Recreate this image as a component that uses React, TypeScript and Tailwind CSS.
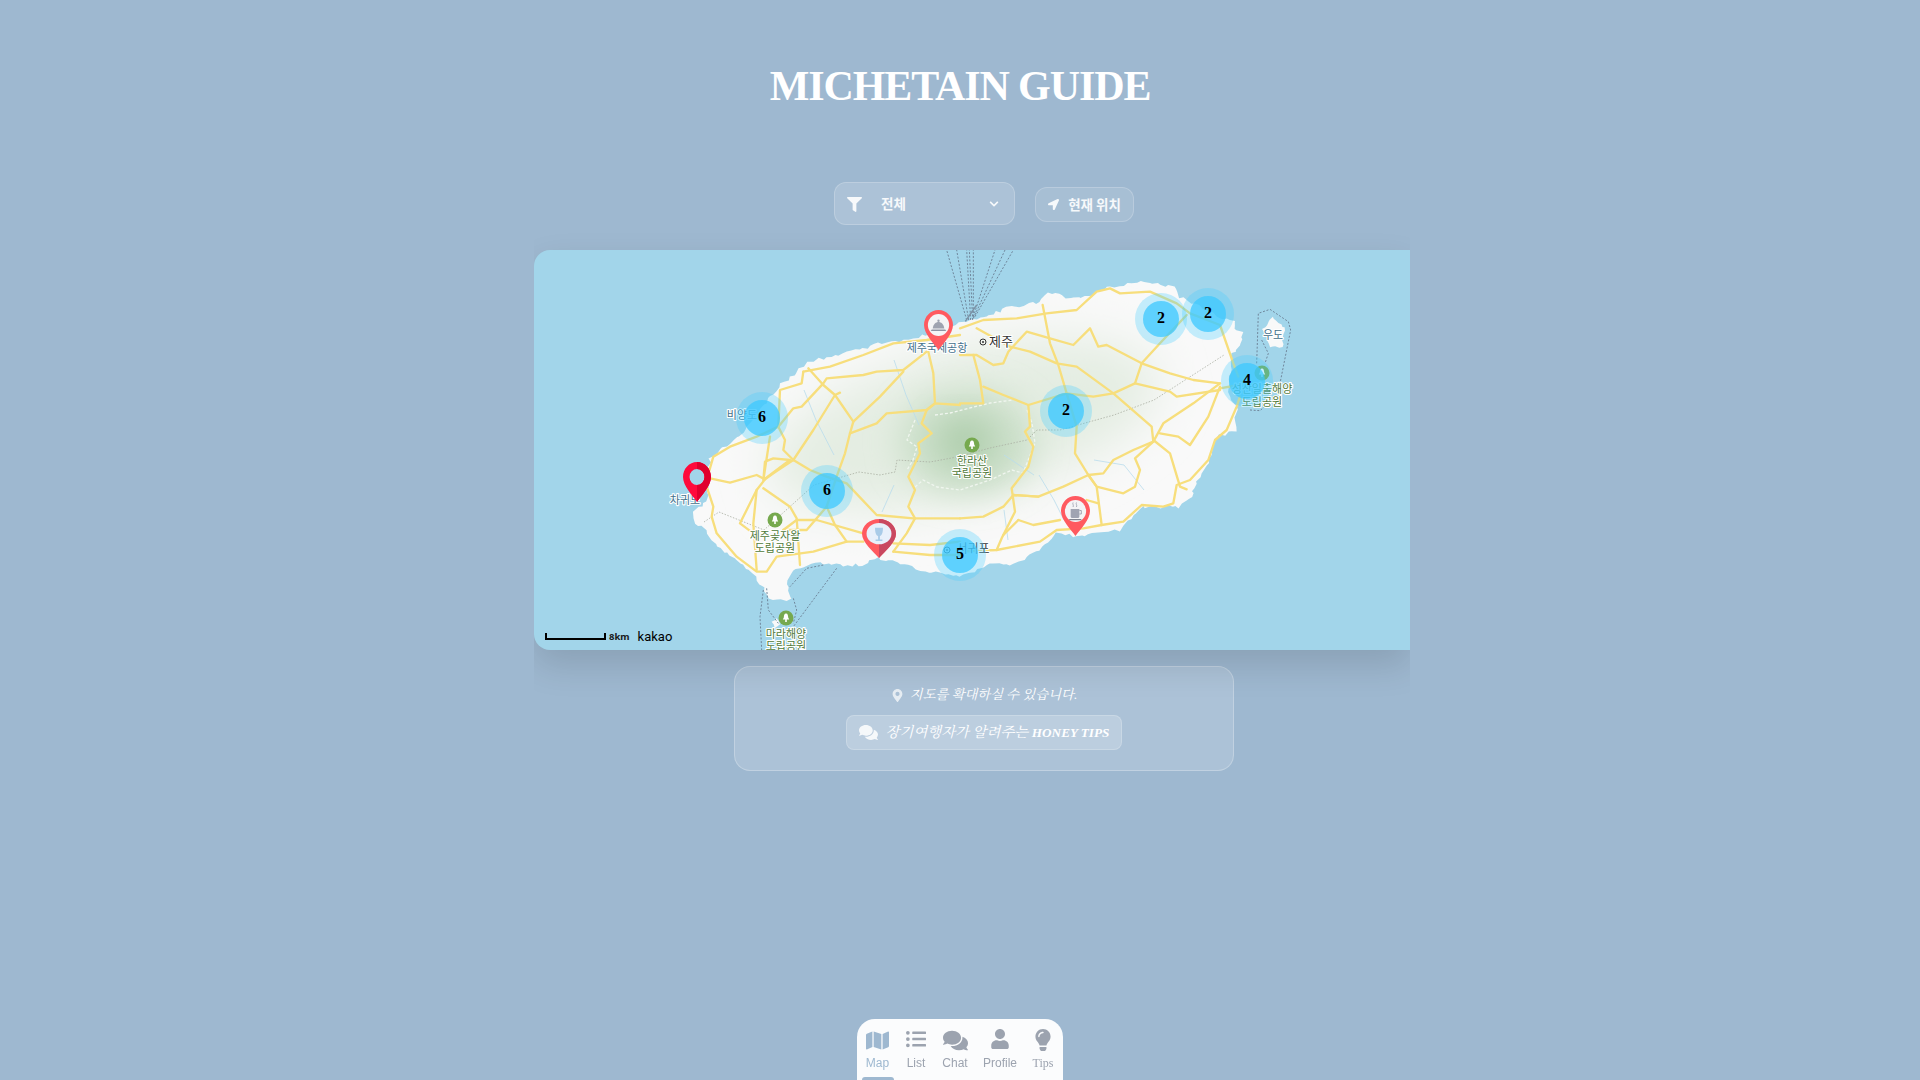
import React from "react";
import { FaFilter, FaChevronDown, FaLocationArrow, FaMapMarkerAlt, FaComments, FaMap, FaListUl, FaUser, FaLightbulb } from "react-icons/fa";

const rough = (pts: number[][], seed: number, amp = 1.6, step = 4) => {
  let s = seed;
  const rnd = () => {
    s = (s * 16807) % 2147483647;
    return s / 2147483647 - 0.5;
  };
  const out: string[] = [];
  pts.forEach((p, i) => {
    const q = pts[(i + 1) % pts.length];
    const d = Math.hypot(q[0] - p[0], q[1] - p[1]);
    const n = Math.max(1, Math.round(d / step));
    for (let k = 0; k < n; k++) {
      const t = k / n;
      out.push(`${(p[0] + (q[0] - p[0]) * t + rnd() * amp * 2).toFixed(1)},${(p[1] + (q[1] - p[1]) * t + rnd() * amp * 2).toFixed(1)}`);
    }
  });
  return out.join(" ");
};

const ISLAND = [
  [176, 208], [199, 190], [209, 183], [222, 165], [244, 137], [269, 117], [272, 112], [313, 103], [345, 94], [373, 90], [400, 82], [426, 73], [449, 68], [473, 58], [506, 52], [513, 42], [536, 48], [556, 46], [573, 38], [598, 33], [611, 32], [639, 37], [646, 47], [668, 58], [689, 70], [701, 70], [699, 80], [708, 83], [706, 97], [698, 103], [696, 123], [693, 143], [703, 157], [701, 180], [683, 187], [673, 217], [659, 237], [660, 244], [646, 257], [608, 257], [586, 280], [543, 287], [523, 283], [506, 300], [493, 307], [476, 315], [456, 312], [440, 322], [426, 327], [386, 320], [363, 312], [344, 308], [329, 315], [306, 315], [286, 313], [263, 318], [253, 330], [256, 350], [236, 350], [229, 337], [216, 320], [183, 297], [169, 277], [161, 273], [159, 263], [173, 250], [174, 223],
];

const R1 = [
  "530,720 550,650 600,620 680,590 745,560 790,505 815,500 880,430 890,415 1000,405 1040,395 1120,390 1190,335",
  "820,395 900,380 1000,345 1090,310 1190,300 1290,285",
  "745,560 750,450 815,430 820,395",
  "835,385 880,435 915,465 970,545 1050,470 1120,395",
  "930,458 915,465 850,570 790,660 760,630 765,600 745,560",
  "970,545 960,580 945,640 920,710 890,800",
  "960,580 1040,550 1070,520 1190,510 1215,490 1290,495",
  "1195,335 1210,400 1215,490 1190,510 1175,550 1205,580 1165,610 1170,640 1150,680 1135,710 1155,750 1135,800 1155,835 1130,880 1090,935",
  "790,660 840,690 890,710 950,730 1040,825 1150,835 1290,835",
  "700,720 780,660 730,655 705,665 700,720 720,590",
  "540,715 600,728 680,705 705,718 730,700 790,660",
  "705,718 680,750 660,790 630,850 670,880",
  "680,750 670,850 680,990",
  "700,745 780,800 800,835 810,975",
  "530,740 550,800 545,830 560,880 620,950 680,995 710,995 740,950 850,935 950,905 1000,905",
  "760,870 800,840 860,840 1000,880",
  "890,800 830,870 760,870",
  "890,800 915,855 950,905",
  "1090,910 1200,915 1290,905",
  "1090,935 1200,945 1290,945",
];
const R2 = [
  "0,345 50,345 100,375 130,370 145,335 200,275 270,295 340,315 390,265 415,320 440,315 545,370 630,400 700,420 780,430",
  "0,265 70,240 170,235 260,220 350,210 410,155 450,145 480,160 570,155 650,190 690,220 780,255 820,370 835,410",
  "840,470 830,500 800,570 765,600 745,660 690,720 650,735 640,790 610,800 545,795 490,845 425,855 370,865 290,870 240,905 110,930 0,935",
  "50,265 150,320 210,335 290,370 350,380 460,460 575,560 580,605 525,655 540,690 525,740 490,760 410,740 385,705 345,640 350,560 320,460 295,375 270,310 248,195",
  "205,495 320,460 400,470 460,460 525,430 545,370 600,310 680,225",
  "525,430 630,455 650,470 780,450",
  "780,430 700,490 610,550 580,605 520,630 460,660 430,700 385,705 310,740 235,770 160,765 130,800 70,830 0,835",
  "780,440 745,530 690,615 655,590 600,580",
  "580,600 630,640 660,740 680,748",
  "385,705 410,740 425,855",
  "380,780 415,790",
  "780,445 835,435",
  "40,345 60,420 70,490 0,490",
  "70,440 130,465 205,495 210,560 195,575 220,620 205,680 155,745 165,815 125,895 110,930",
  "175,840 130,885",
  "175,840 220,855 300,840",
  "160,765 235,770",
];

const Road = ({ p }: { p: string }) => (
  <polyline points={p} fill="none" stroke="#f7de7c" strokeWidth="7" strokeLinejoin="round" strokeLinecap="round" />
);

const Park = ({ x, y }: { x: number; y: number }) => (
  <g transform={`translate(${x},${y})`}>
    <circle r="7.5" fill="#76a94e" />
    <path d="M0,-4.5 C-1.8,-4.5 -2,-2.5 -2.2,-0.5 L-3.2,1.5 L-0.8,1.5 L-0.8,4 L0.8,4 L0.8,1.5 L3.2,1.5 L2.2,-0.5 C2,-2.5 1.8,-4.5 0,-4.5 Z" fill="#fff" />
  </g>
);

const Label = ({ x, y, c, size = 11, children }: { x: number; y: number; c: string; size?: number; children: React.ReactNode }) => (
  <text x={x} y={y + 4} textAnchor="middle" fontSize={size} fill={c} stroke="#fff" strokeWidth="2.2" paintOrder="stroke" strokeLinejoin="round" dominantBaseline="middle" className="font-['Noto_Sans_CJK_KR',sans-serif]">
    {children}
  </text>
);

const MapArt = () => (
  <svg viewBox="0 0 876 400" className="absolute inset-0 w-[876px] h-[400px]">
    <defs>
      <clipPath id="isl">
        <polygon points={rough(ISLAND, 4711)} />
      </clipPath>
      <filter id="b1" x="-50%" y="-50%" width="200%" height="200%"><feGaussianBlur stdDeviation="24" /></filter>
      <filter id="b2" x="-50%" y="-50%" width="200%" height="200%"><feGaussianBlur stdDeviation="16" /></filter>
    </defs>
    <polygon points={rough(ISLAND, 4711)} fill="#f9f9f9" />
    <g clipPath="url(#isl)">
      <ellipse cx="430" cy="175" rx="200" ry="75" fill="#e4ede2" filter="url(#b1)" transform="rotate(-14 430 175)" />
      <ellipse cx="433" cy="192" rx="68" ry="52" fill="#cbdfc9" filter="url(#b2)" />
      <ellipse cx="432" cy="192" rx="28" ry="24" fill="#aecdac" filter="url(#b2)" />
    </g>
    <polygon points={rough([[729, 80], [738, 67], [751, 78], [748, 97], [736, 97]], 99, 1, 3)} fill="#f9f9f9" />
    <polygon points={rough([[238, 372], [243, 368], [246, 374], [241, 378]], 17, 0.4, 3)} fill="#f9f9f9" />
    <g fill="none" stroke="#b9dcec" strokeWidth="0.8">
      <path d="M360,110 L372,145 L385,175 M270,140 L282,170 L300,205 M470,260 L474,290 M560,210 L590,215 L610,240 M505,225 L520,250 L530,270 M360,235 L348,262 M470,205 L500,225" />
    </g>
    <g fill="none" stroke="#a9aea2" strokeWidth="0.8" strokeDasharray="1.5 1.5">
      <path d="M170,272 L185,262 L230,280 L250,262 L280,235 L325,222 L346,225 L361,222 L363,210 L396,212 L423,207 L456,198 L493,190 L503,180 L526,180 L580,165 L620,150 L690,105" />
    </g>
    <g fill="none" stroke="#f0f6ef" strokeWidth="1.3" strokeDasharray="3 2">
      <path d="M401,165 L416,163 L456,153 L479,150" />
      <path d="M381,170 L373,190 L383,197 L379,210 L373,220" />
      <path d="M493,160 L498,173 L501,193 L489,223 L478,220 L456,230 L426,240 L403,237 L389,230 L381,237" />
    </g>
    <g transform="translate(-4,-10) scale(0.33333)">
      <g fill="none" stroke="#6f879c" strokeWidth="3" strokeDasharray="6 5">
        <path d="M1310,240 L1250,30 M1316,240 L1280,30 M1322,240 L1310,30 M1328,240 L1318,30 M1330,230 L1330,30 M1330,230 L1395,30 M1330,235 L1425,30 M1335,230 L1450,30" />
        <path d="M700,1050 L690,1130 L695,1230 M710,1045 L715,1110 L745,1150 M790,1075 L800,1110 L790,1150 M920,985 L790,1160 M880,975 L830,985 L780,1040" />
      </g>
      <path d="M1306,244 L1340,195" stroke="#7c92a5" strokeWidth="4" />
      {R1.map((p, i) => <Road key={i} p={p} />)}
    </g>
    <g transform="translate(426,-10) scale(0.33333)">
      <g fill="none" stroke="#6f879c" strokeWidth="3" strokeDasharray="6 5">
        <path d="M890,370 L895,220 L930,208 L985,245 L992,270 L960,430 M905,300 L925,340 L915,370 M870,510 L900,512 L925,490" />
      </g>
      {R2.map((p, i) => <Road key={i} p={p} />)}
    </g>
    <Label x={403} y={95} c="#44718c">제주국제공항</Label>
    <g>
      <circle cx={449} cy={92} r={3} fill="none" stroke="#333" strokeWidth="1" />
      <circle cx={449} cy={92} r={1} fill="#333" />
      <Label x={467} y={88} c="#333" size={13}>제주</Label>
    </g>
    <Label x={208} y={162} c="#44718c">비양도</Label>
    <Label x={151} y={247} c="#44718c">차귀도</Label>
    <Park x={241} y={270} />
    <Label x={241} y={283} c="#4f7a3a">제주곶자왈</Label>
    <Label x={241} y={295} c="#4f7a3a">도립공원</Label>
    <Park x={438} y={195} />
    <Label x={438} y={208} c="#4f7a3a">한라산</Label>
    <Label x={438} y={220} c="#4f7a3a">국립공원</Label>
    <Park x={252} y={368} />
    <Label x={252} y={381} c="#4f7a3a">마라해양</Label>
    <Label x={252} y={393} c="#4f7a3a">도립공원</Label>
    <g>
      <circle cx={413} cy={300} r={3} fill="none" stroke="#333" strokeWidth="1" />
      <circle cx={413} cy={300} r={1} fill="#333" />
      <Label x={439} y={296} c="#333" size={12}>서귀포</Label>
    </g>
    <Label x={739} y={82} c="#44718c">우도</Label>
    <Park x={728} y={123} />
    <Label x={728} y={136} c="#4f7a3a">성산일출해양</Label>
    <Label x={728} y={149} c="#4f7a3a">도립공원</Label>
  </svg>
);

const Cluster = ({ n, className }: { n: number; className: string }) => (
  <div className={`absolute w-[52px] h-[52px] rounded-full bg-[rgba(70,205,255,0.3)] flex items-center justify-center ${className}`}>
    <div className="w-9 h-9 rounded-full bg-[rgba(60,200,255,0.75)] flex items-center justify-center pb-[2px] text-black font-bold text-[16px] font-['Liberation_Serif',serif]">
      {n}
    </div>
  </div>
);

const PIN = "M15,0 C6.7,0 0,6.7 0,15 C0,24 10,33 15,40 C20,33 30,24 30,15 C30,6.7 23.3,0 15,0 Z";
const HOLE = "M15,7 A8,8 0 1 0 15,23 A8,8 0 1 0 15,7 Z";

const Pin = ({ className, color = "#ff5a60", dark, inner = "#f4f4f6", children }: { className: string; color?: string; dark?: string; inner?: string; children?: React.ReactNode }) => (
  <svg viewBox="0 0 30 40" preserveAspectRatio="none" className={`absolute ${className}`}>
    <path d={PIN} fill={color} />
    {dark && <path d="M15,0 C23.3,0 30,6.7 30,15 C30,24 20,33 15,40 Z" fill={dark} />}
    <circle cx="15" cy="15" r="11" fill={inner} />
    {children}
  </svg>
);

export default function App() {
  return (
    <div className="relative min-h-screen h-[1080px] overflow-hidden bg-[#9eb8d0] font-['Liberation_Sans','Noto_Sans_CJK_KR',sans-serif]">
      <h1 className="pt-[63px] text-center text-white font-bold text-[42px] leading-[46px] tracking-[-1.1px] font-['Liberation_Serif',serif]">MICHETAIN GUIDE</h1>

      <div className="ml-[534px] mt-[73px] w-[900px] flex flex-col">
        <div className="flex items-center justify-center gap-5 h-[43px]">
          <div className="w-[181px] h-[43px] rounded-xl border border-white/20 bg-white/15 flex items-center pl-[12px] pr-[15px] text-white/90">
            <FaFilter className="text-[15px] mt-[1px]" />
            <span className="ml-[19px] text-[13.5px] font-bold font-['Noto_Sans_CJK_KR',sans-serif]">전체</span>
            <FaChevronDown className="ml-auto text-[10px] mt-[1px]" />
          </div>
          <div className="mt-[2px] w-[99px] h-[35px] rounded-xl border border-white/20 bg-white/10 flex items-center justify-center gap-[9px] text-white/90">
            <FaLocationArrow className="text-[11px]" />
            <span className="text-[13.5px] font-bold font-['Noto_Sans_CJK_KR',sans-serif]">현재 위치</span>
          </div>
        </div>

        <div className="mt-[25px] w-[876px] [clip-path:inset(-60px_0)]">
          <div className="relative w-[876px] h-[400px] rounded-l-2xl overflow-hidden bg-[#a2d5ea] shadow-[0_15px_35px_rgba(0,0,0,0.13)]">
            <MapArt />
            <Cluster n={6} className="left-[202px] top-[142px]" />
            <Cluster n={6} className="left-[267px] top-[215px]" />
            <Cluster n={5} className="left-[400px] top-[279px]" />
            <Cluster n={2} className="left-[601px] top-[43px]" />
            <Cluster n={2} className="left-[648px] top-[38px]" />
            <Cluster n={4} className="left-[687px] top-[105px]" />
            <Cluster n={2} className="left-[506px] top-[135px]" />

            <Pin className="left-[390px] top-[60px] w-[29px] h-[40px]">
              <path d="M8,19.5 H22 L23,21 H7 Z" fill="#8f93a3" />
              <path d="M9,18.5 C9.5,14 12.5,12 15,12 C17.5,12 20.5,14 21,18.5 Z" fill="#9ea2b0" />
              <circle cx="15" cy="10.8" r="1.2" fill="#9ea2b0" />
            </Pin>
            <svg viewBox="0 0 30 40" preserveAspectRatio="none" className="absolute left-[149px] top-[212px] w-[28px] h-[40px]">
              <path d={PIN + " " + HOLE} fill="#ff0a3c" fillRule="evenodd" />
              <path d={"M15,0 C23.3,0 30,6.7 30,15 C30,24 20,33 15,40 L15,23 A8,8 0 0 0 15,7 Z"} fill="#e0002e" />
            </svg>
            <Pin className="left-[328px] top-[269px] w-[34px] h-[39px]" dark="#c94860" inner="#e8f0fb">
              <path d="M11.5,9 H18.5 C18.5,14 17.5,17 15.8,17.5 V21 H18 V22.5 H12 V21 H14.2 V17.5 C12.5,17 11.5,14 11.5,9 Z" fill="#a9cbe8" />
            </Pin>
            <Pin className="left-[527px] top-[246px] w-[29px] h-[40px]">
              <path d="M10,13 H19 V20.5 C19,21.5 18,22 17,22 H12 C11,22 10,21.5 10,20.5 Z" fill="#a0a4b2" />
              <path d="M19,14.5 H21 V18 H19" fill="none" stroke="#a0a4b2" strokeWidth="1" />
              <rect x="8.5" y="23" width="12.5" height="1.2" fill="#80848f" />
              <path d="M12.5,6.5 C11.5,8 13.5,9 12.5,11 M16,6.5 C15,8 17,9 16,11" fill="none" stroke="#a0a4b2" strokeWidth="0.9" />
            </Pin>

            <div className="absolute left-[11px] bottom-[10px] flex items-end text-[#1a1a1a]">
              <div className="w-[61px] h-[7px] border-l-2 border-r-2 border-b-2 border-black" />
              <span className="ml-[3px] text-[9.5px] leading-[10px] font-bold font-['Noto_Sans',sans-serif] translate-y-[2px]">8km</span>
              <span className="ml-[8px] text-[13px] leading-[13px] text-black font-['Roboto',sans-serif] translate-y-[3px]">kakao</span>
            </div>
          </div>
        </div>

        <div className="mt-4 mx-auto w-[500px] h-[105px] rounded-2xl border border-white/25 bg-white/15 flex flex-col items-center pt-[18px]">
          <div className="flex items-center gap-[6px] text-white italic text-[13.3px] leading-[20px] font-['Liberation_Serif','Noto_Serif_CJK_KR','Noto_Sans_CJK_KR',serif]">
            <FaMapMarkerAlt className="text-[13px] text-white/70 mt-[1px]" />
            <span>지도를 확대하실 수 있습니다.</span>
          </div>
          <div className="mt-[10px] w-[276px] h-[35px] rounded-lg border border-white/20 bg-white/20 flex items-center justify-center gap-[8px] text-white italic text-[14.4px] font-['Liberation_Serif','Noto_Serif_CJK_KR','Noto_Sans_CJK_KR',serif]">
            <FaComments className="text-[19px] not-italic text-white/85" />
            <span>장기여행자가 알려주는 <b className="font-bold text-[13.2px]">HONEY TIPS</b></span>
          </div>
        </div>
      </div>

      <nav className="fixed bottom-0 left-1/2 -translate-x-1/2 w-[206px] h-[61px] bg-[#fbfcfd] rounded-t-[18px] flex justify-start text-[#9ca3af] text-[12px] leading-[14px]">
        <div className="relative w-[41px] flex flex-col items-center pt-[10px] text-[#9eb8d0]">
          <FaMap className="text-[23px]" />
          <span className="mt-[4px]">Map</span>
          <div className="absolute bottom-0 left-[5px] w-[32px] h-[3px] rounded-t bg-[#9eb8d0]" />
        </div>
        <div className="w-[36px] flex flex-col items-center pt-[10px]">
          <FaListUl className="text-[20px] mb-[3px]" />
          <span className="mt-[4px]">List</span>
        </div>
        <div className="w-[42px] flex flex-col items-center pt-[10px]">
          <FaComments className="text-[25px] -mb-[1px] -mt-[1px]" />
          <span className="mt-[4px]">Chat</span>
        </div>
        <div className="w-[48px] flex flex-col items-center pt-[10px]">
          <FaUser className="text-[20px] mb-[3px]" />
          <span className="mt-[4px]">Profile</span>
        </div>
        <div className="w-[38px] flex flex-col items-center pt-[10px] font-['Liberation_Serif',serif]">
          <FaLightbulb className="text-[22px] mb-[1px]" />
          <span className="mt-[4px]">Tips</span>
        </div>
      </nav>
    </div>
  );
}
